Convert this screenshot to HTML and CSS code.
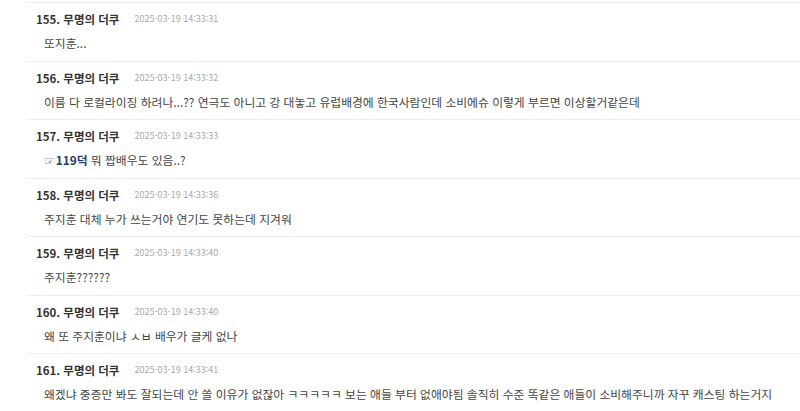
FILE: index.html
```html
<!DOCTYPE html>
<html lang="ko">
<head>
<meta charset="utf-8">
<link rel="stylesheet" href="styles.css">
</head>
<body>
<ul class="comments">
  <li class="comment">
    <div class="meta"><span class="author">155. 무명의 더쿠</span><span class="date">2025-03-19 14:33:31</span></div>
    <div class="body">또지훈...</div>
  </li>
  <li class="comment">
    <div class="meta"><span class="author">156. 무명의 더쿠</span><span class="date">2025-03-19 14:33:32</span></div>
    <div class="body">이름 다 로컬라이징 하려나...?? 연극도 아니고 강 대놓고 유럽배경에 한국사람인데 소비에슈 이렇게 부르면 이상할거같은데</div>
  </li>
  <li class="comment">
    <div class="meta"><span class="author">157. 무명의 더쿠</span><span class="date">2025-03-19 14:33:33</span></div>
    <div class="body"><a class="ref"><span class="hand">☞</span>119덕</a> 뭐 짭배우도 있음..?</div>
  </li>
  <li class="comment">
    <div class="meta"><span class="author">158. 무명의 더쿠</span><span class="date">2025-03-19 14:33:36</span></div>
    <div class="body">주지훈 대체 누가 쓰는거야 연기도 못하는데 지겨워</div>
  </li>
  <li class="comment">
    <div class="meta"><span class="author">159. 무명의 더쿠</span><span class="date">2025-03-19 14:33:40</span></div>
    <div class="body">주지훈??????</div>
  </li>
  <li class="comment">
    <div class="meta"><span class="author">160. 무명의 더쿠</span><span class="date">2025-03-19 14:33:40</span></div>
    <div class="body">왜 또 주지훈이냐 ㅅㅂ 배우가 글케 없나</div>
  </li>
  <li class="comment">
    <div class="meta"><span class="author">161. 무명의 더쿠</span><span class="date">2025-03-19 14:33:41</span></div>
    <div class="body">왜겠냐 중증만 봐도 잘되는데 안 쓸 이유가 없잖아 ㅋㅋㅋㅋㅋ 보는 애들 부터 없애야됨 솔직히 수준 똑같은 애들이 소비해주니까 자꾸 캐스팅 하는거지</div>
  </li>
</ul>
</body>
</html>
```

FILE: styles.css
```css
html, body {
  margin: 0;
  padding: 0;
  background: #ffffff;
  overflow: hidden;
}
body {
  font-family: "Noto Sans CJK KR", "Noto Sans", sans-serif;
  color: #444444;
}
.comments {
  list-style: none;
  margin: 0 0 0 27px;
  padding: 2px 0 0 0;
}
.comment {
  border-top: 1px solid #eeeeee;
  padding: 6px 0 8.5px 9px;
}
.meta {
  display: flex;
  align-items: center;
  gap: 15px;
  height: 20px;
  line-height: 20px;
  overflow: hidden;
}
.author {
  font-size: 11.5px;
  font-weight: bold;
  color: #333333;
}
.date {
  font-size: 9px;
  color: #aaaaaa;
}
.body {
  margin-top: 5px;
  padding-left: 8px;
  font-size: 11.8px;
  height: 18px;
  line-height: 18px;
  white-space: nowrap;
  overflow: hidden;
  color: #444444;
}
.ref {
  color: #23406e;
  font-weight: bold;
}
.hand {
  font-family: "DejaVu Sans", sans-serif;
  font-weight: normal;
  font-size: 12px;
  color: #1d3560;
  margin-right: 1px;
}
```
